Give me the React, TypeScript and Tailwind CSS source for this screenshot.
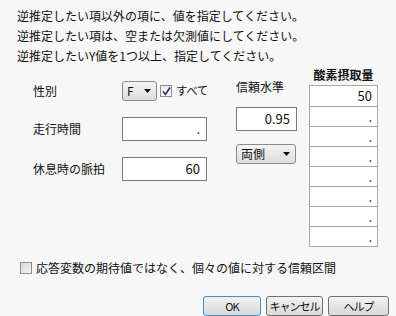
const font = {
  fontFamily: '"Noto Sans CJK JP", "Noto Sans", sans-serif',
};

function Caret() {
  return (
    <svg width="7" height="4" viewBox="0 0 7 4" className="shrink-0">
      <path d="M0 0h7L3.5 4z" fill="#111" />
    </svg>
  );
}

function Dropdown({ label, className }: { label: string; className: string }) {
  return (
    <div
      className={
        "flex shrink-0 items-center justify-between rounded-[3px] border border-[#8a8a8a] bg-gradient-to-b from-[#f4f4f4] to-[#dcdcdc] pl-[4px] pr-[5px] " +
        className
      }
    >
      <span className="leading-none">{label}</span>
      <Caret />
    </div>
  );
}

function NumBox({ value, className }: { value: string; className: string }) {
  return (
    <div
      className={
        "flex items-center justify-end border border-[#7a7a7a] bg-white pr-[6px] text-[13px] " + className
      }
    >
      {value}
    </div>
  );
}

function Button({ label, primary, w }: { label: string; primary?: boolean; w: string }) {
  return (
    <div
      className={
        "flex h-[20px] items-center justify-center whitespace-nowrap rounded-[3px] border bg-gradient-to-b from-[#f2f2f2] to-[#d9d9d9] text-[11px] tracking-[-1px] " +
        (primary ? "border-[#3c8fc7] " : "border-[#707070] ") +
        w
      }
    >
      {label}
    </div>
  );
}

export default function App() {
  const rows = ["50", ".", ".", ".", ".", ".", ".", "."];
  return (
    <div style={font} className="h-[316px] w-[396px] overflow-hidden bg-[#f7f7f7] text-[12px] text-[#111]">
      <div className="pl-[17px] pt-[6px] leading-[20px]">
        <div>逆推定したい項以外の項に、値を指定してください。</div>
        <div>逆推定したい項は、空または欠測値にしてください。</div>
        <div>逆推定したいY値を1つ以上、指定してください。</div>
      </div>

      <div className="flex">
        {/* left column */}
        <div className="ml-[33px] w-[174px] shrink-0">
          <div className="mt-[15px] flex h-[20px] items-center whitespace-nowrap">
            <span className="w-[89px] shrink-0">性別</span>
            <Dropdown label="F" className="h-[20px] w-[35px]" />
            <div className="ml-[3px] flex h-[12px] w-[12px] shrink-0 items-center justify-center border border-[#8e8f8f] bg-gradient-to-b from-[#e9e9e9] to-[#fdfdfd]">
              <svg width="9" height="9" viewBox="0 0 9 9">
                <path d="M1 4.5L3.5 7.5L8 0.5" fill="none" stroke="#2b2f6b" strokeWidth="1.6" />
              </svg>
            </div>
            <span className="ml-[4px] shrink-0 text-[11.5px] tracking-[-0.5px]">すべて</span>
          </div>
          <div className="mt-[16px] flex h-[24px] items-center">
            <span className="w-[89px]">走行時間</span>
            <NumBox value="." className="h-[24px] w-[85px]" />
          </div>
          <div className="mt-[16px] flex h-[24px] items-center">
            <span className="w-[89px]">休息時の脈拍</span>
            <NumBox value="60" className="h-[24px] w-[85px]" />
          </div>
        </div>

        {/* middle column */}
        <div className="ml-[29px] w-[61px] shrink-0">
          <div className="mt-[13px] whitespace-nowrap leading-[16px]">信頼水準</div>
          <NumBox value="0.95" className="mt-[12px] h-[24px] w-[61px]" />
          <Dropdown label="両側" className="mt-[13px] h-[20px] w-[60px]" />
        </div>

        {/* right column */}
        <div className="ml-[12px] w-[69px] shrink-0">
          <div className="mt-[1px] whitespace-nowrap text-center font-bold leading-[16px]">酸素摂取量</div>
          <div className="mt-[2px] border border-[#a8a8a8] bg-white">
            {rows.map((r, i) => (
              <div
                key={i}
                className={
                  "flex h-[20px] items-center justify-end pr-[5px] text-[13px] " +
                  (i > 0 ? "border-t border-[#a8a8a8]" : "")
                }
              >
                {r}
              </div>
            ))}
          </div>
        </div>
      </div>

      <div className="ml-[20px] mt-[13px] flex h-[16px] items-center">
        <div className="h-[12px] w-[12px] border border-[#8e8e8e] bg-gradient-to-br from-[#d8d8d8] to-[#f4f4f4]" />
        <span className="ml-[4px]">応答変数の期待値ではなく、個々の値に対する信頼区間</span>
      </div>

      <div className="mt-[20px] flex justify-end gap-[5px] pr-[7px]">
        <Button label="OK" primary w="w-[58px]" />
        <Button label="キャンセル" w="w-[57px]" />
        <Button label="ヘルプ" w="w-[61px]" />
      </div>
    </div>
  );
}
